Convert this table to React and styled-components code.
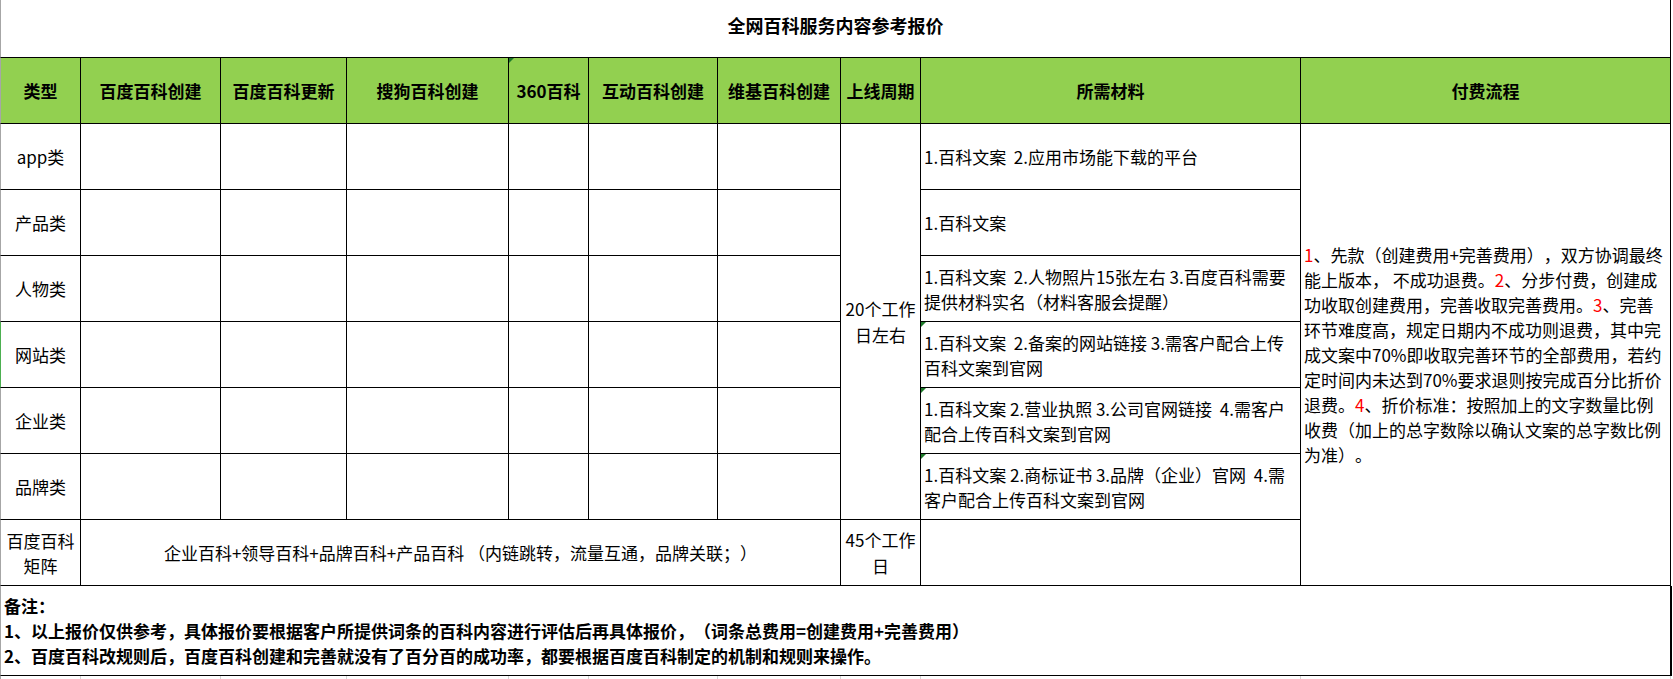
import React from "react";
import styled, { createGlobalStyle } from "styled-components";

const GlobalStyle = createGlobalStyle`
  html, body {
    margin: 0;
    padding: 0;
    background: #fff;
  }
  body {
    font-family: "Noto Sans CJK SC", "Noto Sans", sans-serif;
    color: #000;
    text-spacing-trim: space-all;
  }
`;

// column widths measured off the sheet, borders included
const Sheet = styled.div`
  width: 1673px;
  height: 679px;
  overflow: hidden;
  display: grid;
  grid-template-columns: 81px 140px 126px 162px 80px 129px 123px 80px 380px 370px;
  grid-template-rows: 58px 66px repeat(7, 66px) 90px 4px;
`;

const Cell = styled.div`
  box-sizing: border-box;
  position: relative;
  display: flex;
  flex-direction: column;
  justify-content: center;
  align-items: ${(p) => (p.$left ? "flex-start" : "center")};
  text-align: ${(p) => (p.$left ? "left" : "center")};
  padding: ${(p) => (p.$left ? "0 0 0 3px" : "0")};
  border-right: 1px solid #000;
  border-bottom: 1px solid #000;
  border-left: ${(p) => (p.$first ? `1px solid ${p.$edge || "#a6a6a6"}` : "0")};
  grid-column: ${(p) => (p.$span ? `span ${p.$span}` : "auto")};
  grid-row: ${(p) => (p.$rows ? `span ${p.$rows}` : "auto")};
  font-size: 17px;
  line-height: ${(p) => p.$lh || 25}px;
  white-space: pre;
`;

const Title = styled(Cell)`
  grid-column: 1 / -1;
  font-size: 18px;
  font-weight: 700;
  padding-bottom: 7px;
`;

const Head = styled(Cell)`
  background: #92d050;
  font-weight: 700;
`;

const Notes = styled(Cell)`
  grid-column: 1 / -1;
  font-weight: 700;
  padding-left: 3px;
  box-shadow: 1px 0 0 #000;
`;

const GridTail = styled.div`
  box-sizing: border-box;
  border-right: 1px solid #d4d4d4;
  border-left: ${(p) => (p.$first ? "1px solid #a6a6a6" : "0")};
`;

const Marker = styled.span`
  position: absolute;
  top: 0;
  left: 0;
  width: 0;
  height: 0;
  border-top: 5px solid #1d7a2a;
  border-right: 5px solid transparent;
`;

const Red = styled.span`
  color: #ff0000;
`;

const Line = styled.span`
  display: block;
`;

const heads = [
  "类型",
  "百度百科创建",
  "百度百科更新",
  "搜狗百科创建",
  "360百科",
  "互动百科创建",
  "维基百科创建",
  "上线周期",
  "所需材料",
  "付费流程",
];

const rows = [
  { label: "app类", material: ["1.百科文案  2.应用市场能下载的平台"] },
  { label: "产品类", material: ["1.百科文案"] },
  {
    label: "人物类",
    material: ["1.百科文案  2.人物照片15张左右 3.百度百科需要", "提供材料实名（材料客服会提醒）"],
  },
  {
    label: "网站类",
    edge: "#4caf50",
    mark: true,
    material: ["1.百科文案  2.备案的网站链接 3.需客户配合上传", "百科文案到官网"],
  },
  {
    label: "企业类",
    mark: true,
    material: ["1.百科文案 2.营业执照 3.公司官网链接  4.需客户", "配合上传百科文案到官网"],
  },
  {
    label: "品牌类",
    mark: true,
    material: ["1.百科文案 2.商标证书 3.品牌（企业）官网  4.需", "客户配合上传百科文案到官网"],
  },
];

const payLines = [
  [<Red key="r">1</Red>, "、先款（创建费用+完善费用），双方协调最终"],
  ["能上版本， 不成功退费。", <Red key="r">2</Red>, "、分步付费，创建成"],
  ["功收取创建费用，完善收取完善费用。", <Red key="r">3</Red>, "、完善"],
  ["环节难度高，规定日期内不成功则退费，其中完"],
  ["成文案中70%即收取完善环节的全部费用，若约"],
  ["定时间内未达到70%要求退则按完成百分比折价"],
  ["退费。", <Red key="r">4</Red>, "、折价标准：按照加上的文字数量比例"],
  ["收费（加上的总字数除以确认文案的总字数比例"],
  ["为准）。"],
];

const Lines = ({ items }) => items.map((t, i) => <Line key={i}>{t}</Line>);

export default function App() {
  return (
    <>
      <GlobalStyle />
      <Sheet>
        <Title $first>全网百科服务内容参考报价</Title>

        {heads.map((h, i) => (
          <Head key={h} $first={i === 0}>
            {i === 4 && <Marker />}
            {h}
          </Head>
        ))}

        {rows.map((r, i) => (
          <React.Fragment key={r.label}>
            <Cell $first $edge={r.edge}>{r.label}</Cell>
            {[0, 1, 2, 3, 4, 5].map((k) => (
              <Cell key={k} />
            ))}
            {i === 0 && (
              <Cell $rows={6} $lh={26}>
                <Lines items={["20个工作", "日左右"]} />
              </Cell>
            )}
            <Cell $left>
              {r.mark && <Marker />}
              <Lines items={r.material} />
            </Cell>
            {i === 0 && (
              <Cell $rows={7} $left>
                <Lines items={payLines} />
              </Cell>
            )}
          </React.Fragment>
        ))}

        <Cell $first>
          <Lines items={["百度百科", "矩阵"]} />
        </Cell>
        <Cell $span={6}>企业百科+领导百科+品牌百科+产品百科 （内链跳转，流量互通，品牌关联；）</Cell>
        <Cell $lh={26}>
          <Lines items={["45个工作", "日"]} />
        </Cell>
        <Cell />

        <Notes $first $left>
          <Lines
            items={[
              "备注：",
              "1、以上报价仅供参考，具体报价要根据客户所提供词条的百科内容进行评估后再具体报价，（词条总费用=创建费用+完善费用）",
              "2、百度百科改规则后，百度百科创建和完善就没有了百分百的成功率，都要根据百度百科制定的机制和规则来操作。",
            ]}
          />
        </Notes>

        {heads.map((h, i) => (
          <GridTail key={h} $first={i === 0} />
        ))}
      </Sheet>
    </>
  );
}
